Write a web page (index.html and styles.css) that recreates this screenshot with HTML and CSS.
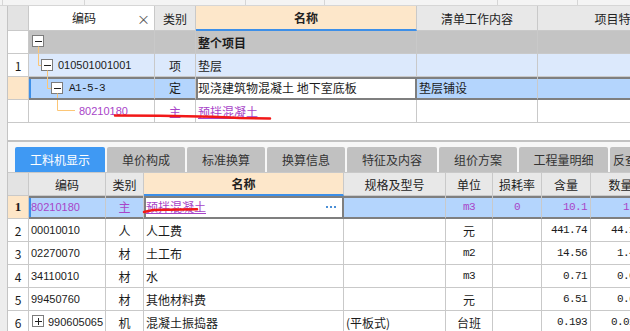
FILE: index.html
```html
<!DOCTYPE html>
<html>
<head>
<meta charset="utf-8">
<title>工料机显示</title>
<link rel="stylesheet" href="styles.css">
</head>
<body>

	<div class="strip"><span></span><span></span><span></span><span></span><span></span><span></span><span></span></div>

	<div class="frame">

		<!-- Arbre des postes -->
		<div class="upper">
			<table class="grid top">
				<colgroup>
					<col class="w-num"><col class="w-code"><col class="w-type"><col class="w-name"><col class="w-work"><col class="w-feat">
				</colgroup>
				<tr class="head">
					<th class="num"></th>
					<th class="code-h"><span></span><span>编码</span><span class="x">×</span></th>
					<th>类别</th>
					<th class="name-h">名称</th>
					<th>清单工作内容</th>
					<th>项目特征</th>
				</tr>
				<tr class="whole">
					<td class="num"></td>
					<td class="code"><div class="tree">
						<svg width="20" height="22"><rect x="3.5" y="4.5" width="11" height="11" class="box"/><path d="M6 10.5h7" class="sign"/><path d="M9.5 15.5V22" class="link"/></svg>
					</div></td>
					<td></td>
					<td class="name"><b>整个项目</b></td>
					<td></td>
					<td></td>
				</tr>
				<tr class="bill">
					<td class="num">1</td>
					<td class="code"><div class="tree">
						<svg width="29" height="22"><path d="M9.5 0V11.5H12.5" class="link"/><rect x="12.5" y="5.5" width="11" height="11" class="box"/><path d="M15 11.5h7" class="sign"/><path d="M18.5 16.5V22" class="link"/></svg>
						<span>010501001001</span>
					</div></td>
					<td class="c">项</td>
					<td class="name">垫层</td>
					<td></td>
					<td></td>
				</tr>
				<tr class="sel">
					<td class="num"></td>
					<td class="code"><div class="tree">
						<svg width="40" height="21"><path d="M18.5 0V11.5H22.5" class="link"/><rect x="22.5" y="5.5" width="11" height="11" class="box"/><path d="M25 11.5h7" class="sign"/><path d="M28.5 16.5V21" class="link"/></svg>
						<span class="mono">A1-5-3</span>
					</div></td>
					<td class="c">定</td>
					<td class="name active">现浇建筑物混凝土 地下室底板</td>
					<td class="name">垫层铺设</td>
					<td></td>
				</tr>
				<tr class="main">
					<td class="num"></td>
					<td class="code"><div class="tree">
						<svg width="50" height="22"><path d="M28.5 0V10.5H46" class="link"/></svg>
						<span>80210180</span>
					</div></td>
					<td class="c">主</td>
					<td class="name"><u>预拌混凝土</u></td>
					<td></td>
					<td></td>
				</tr>
			</table>
		</div>

		<div class="split"></div>

		<!-- Onglets -->
		<div class="tabs">
			<span class="tab on t1">工料机显示</span>
			<span class="tab t2">单价构成</span>
			<span class="tab t2">标准换算</span>
			<span class="tab t2">换算信息</span>
			<span class="tab t1">特征及内容</span>
			<span class="tab t2">组价方案</span>
			<span class="tab t3">工程量明细</span>
			<span class="tab t1">反查图形工程量</span>
		</div>

		<!-- Liste des ressources -->
		<table class="grid low">
			<colgroup>
				<col class="w-num"><col class="l-code"><col class="l-type"><col class="l-name"><col class="l-spec"><col class="l-unit"><col class="l-loss"><col class="l-amt"><col class="l-qty">
			</colgroup>
			<tr class="head">
				<th class="num"></th>
				<th>编码</th>
				<th>类别</th>
				<th class="name-h">名称</th>
				<th>规格及型号</th>
				<th>单位</th>
				<th>损耗率</th>
				<th>含量</th>
				<th>数量</th>
			</tr>
			<tr class="sel main">
				<td class="num"><b>1</b></td>
				<td class="code">80210180</td>
				<td class="c">主</td>
				<td class="name active"><div class="edit"><u>预拌混凝土</u><svg width="10" height="2"><rect x="0" width="2" height="2"/><rect x="4" width="2" height="2"/><rect x="8" width="2" height="2"/></svg></div></td>
				<td></td>
				<td class="c mono">m3</td>
				<td class="c mono">0</td>
				<td class="r mono">10.1</td>
				<td class="r mono">1.01</td>
			</tr>
			<tr>
				<td class="num">2</td>
				<td class="code">00010010</td>
				<td class="c">人</td>
				<td class="name">人工费</td>
				<td></td>
				<td class="c">元</td>
				<td></td>
				<td class="r mono">441.74</td>
				<td class="r mono">44.174</td>
			</tr>
			<tr>
				<td class="num">3</td>
				<td class="code">02270070</td>
				<td class="c">材</td>
				<td class="name">土工布</td>
				<td></td>
				<td class="c mono">m2</td>
				<td></td>
				<td class="r mono">14.56</td>
				<td class="r mono">1.456</td>
			</tr>
			<tr>
				<td class="num">4</td>
				<td class="code">34110010</td>
				<td class="c">材</td>
				<td class="name">水</td>
				<td></td>
				<td class="c mono">m3</td>
				<td></td>
				<td class="r mono">0.71</td>
				<td class="r mono">0.071</td>
			</tr>
			<tr>
				<td class="num">5</td>
				<td class="code">99450760</td>
				<td class="c">材</td>
				<td class="name">其他材料费</td>
				<td></td>
				<td class="c">元</td>
				<td></td>
				<td class="r mono">6.51</td>
				<td class="r mono">0.651</td>
			</tr>
			<tr>
				<td class="num">6</td>
				<td class="code"><div class="tree">
					<svg width="19" height="22"><rect x="3.5" y="4.5" width="11" height="11" class="box"/><path d="M6 10.5h7M9.5 7v7" class="sign"/></svg>
					<span>990605065</span>
				</div></td>
				<td class="c">机</td>
				<td class="name">混凝土振捣器</td>
				<td class="name">(平板式)</td>
				<td class="c">台班</td>
				<td></td>
				<td class="r mono">0.193</td>
				<td class="r mono">0.0193</td>
			</tr>
		</table>

	</div>

	<!-- Traits rouges -->
	<svg class="marks" width="630" height="331">
		<path d="M115 115.5 L160 115.8 L213 116.8 L240 118 L270 118.6"/>
		<path d="M144 212 L153 210 L197 209.3"/>
	</svg>

</body>
</html>
```

FILE: styles.css
```css
* {
	margin: 0;
	padding: 0;
	box-sizing: border-box;
}


body {
	position: relative;
	width: 630px;
	height: 331px;
	overflow: hidden;
	background: #ededed;
	font: 12px "Noto Sans CJK SC", "Liberation Sans", sans-serif;
	color: #1b1b1b;
}


/* Bande du haut */

.strip {
	display: flex;
	height: 6px;
	background: #f4f4f4;
	border-bottom: 1px solid #d6d6d6;
}

.strip span {
	flex: none;
	border-right: 1px solid #d6d6d6;
}

.strip span:nth-child(1) { width: 3px; }
.strip span:nth-child(2) { width: 82px; }
.strip span:nth-child(3) { width: 161px; }
.strip span:nth-child(4) { width: 79px; }
.strip span:nth-child(5) { width: 173px; }
.strip span:nth-child(6) { width: 80px; }
.strip span:nth-child(7) { flex: 1; border: none; }


.frame {
	margin-left: 7px;
	width: 623px;
	border-left: 1px solid #c4c4c4;
	overflow: hidden;
}

.upper {
	height: 134px;
	background: #fff;
}

.split {
	height: 2px;
	background: #c2c2c2;
}


/* Onglets */

.tabs {
	display: flex;
	gap: 2px;
	height: 30px;
	padding: 5px 0 0 7px;
	background: #f7f7f7;
}

.tab {
	flex: none;
	height: 25px;
	line-height: 25px;
	text-align: center;
	white-space: nowrap;
	overflow: hidden;
	background: #c1c1c1;
	color: #333;
	border-radius: 2px 2px 0 0;
}

.tab.on {
	background: #3f99f3;
	color: #fff;
}

.t1 { width: 90px; }
.t2 { width: 78px; }
.t3 { width: 89px; }


/* Grilles */

.grid {
	border-collapse: separate;
	border-spacing: 0;
	table-layout: fixed;
	background: #fff;
}

.grid.top { width: 692px; }
.grid.low { width: 643px; border-top: 1px solid #c9c9c9; }

.w-num { width: 21px; }
.w-code { width: 126px; }
.w-type { width: 41px; }
.w-name { width: 221px; }
.w-work { width: 121px; }
.w-feat { width: 162px; }

.l-code { width: 77px; }
.l-type { width: 38px; }
.l-name { width: 200px; }
.l-spec { width: 102px; }
.l-unit { width: 47px; }
.l-loss { width: 49px; }
.l-amt { width: 49px; }
.l-qty { width: 60px; }

.grid tr { height: 23px; }
.grid.top tr.head { height: 25px; }

.grid th, .grid td {
	padding: 0 2px;
	border-right: 1px solid #c9c9c9;
	border-bottom: 1px solid #c9c9c9;
	white-space: nowrap;
	overflow: hidden;
	font-weight: normal;
	vertical-align: middle;
}

.grid th {
	background: #e8e8e8;
	text-align: center;
	color: #222;
}

.grid th.num {
	background: #e3e3e3;
}

.grid th.name-h {
	background: #fde7ca;
	font-weight: bold;
	border-bottom: 2px solid #3d8fe8;
}

.code-h {
	display: grid;
	grid-template-columns: 1fr auto 1fr;
	align-items: center;
	height: 25px;
}

.grid th.code-h {
	background: #fff;
	display: table-cell;
}

.code-h .x {
	justify-self: end;
	float: right;
	margin-right: 2px;
	color: #555;
	font-size: 13px;
}

.grid td.num {
	text-align: center;
	background: #fff;
	padding: 0;
}

.grid td.code {
	padding: 0 2px;
	font: 11px "Liberation Sans", sans-serif;
}

.grid td.c { text-align: center; }
.grid td.r { text-align: right; padding-right: 3px; }
.grid td.name { padding-left: 2px; }

.mono {
	font-family: "Liberation Mono", monospace;
	font-size: 11px;
	letter-spacing: -0.6px;
}

.grid td.c.mono, .grid td.r.mono {
	font-family: "Liberation Mono", monospace;
	font-size: 11px;
	letter-spacing: -0.6px;
}


/* Arbre */

.grid .tree {
	display: flex;
	align-items: center;
	margin-left: -2px;
}

.tree svg {
	flex: none;
	display: block;
}

.tree .mono {
	font-family: "Liberation Mono", monospace;
}

.box {
	fill: #fff;
	stroke: #7c7c7c;
}

.sign {
	stroke: #222;
	fill: none;
}

.link {
	stroke: #fcc676;
	fill: none;
}


/* Lignes */

.whole td:not(.num) { background: #c4c4c4; }

.bill td:not(.num) { background: #dce9fc; }

.sel td { background: #b4d5fd; }

.sel td:not(.num) {
	border-bottom: 2px solid #7f7f7f;
	box-shadow: inset 0 2px #7f7f7f;
}

.sel td.num {
	background: #fde6c8;
	font-family: "Liberation Serif", serif;
	font-size: 13px;
}

.sel td.code {
	box-shadow: inset 0 2px #7f7f7f, inset 2px 0 #3d8fe8;
}

.sel td.active {
	background: #fff;
	border-right: 2px solid #7f7f7f;
	box-shadow: inset 0 2px #7f7f7f, inset 2px 0 #7f7f7f;
}

.main td:not(.num), .main td u {
	color: #a844c8;
}

.edit {
	display: flex;
	align-items: center;
	justify-content: space-between;
	padding-right: 4px;
}

.edit svg {
	fill: #4b8fd6;
}

.grid.low td.code { padding-left: 2px; }


/* Traits rouges */

.marks {
	position: absolute;
	left: 0;
	top: 0;
	pointer-events: none;
}

.marks path {
	fill: none;
	stroke: #f21818;
	stroke-width: 2.5;
	stroke-linecap: round;
	stroke-linejoin: round;
}
```
